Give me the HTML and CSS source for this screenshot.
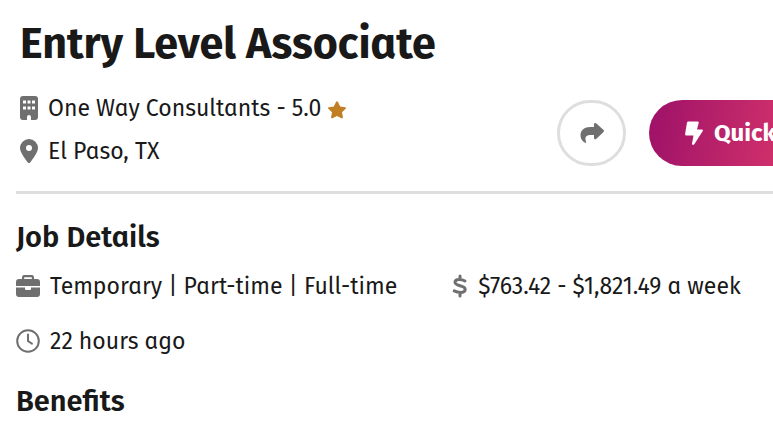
FILE: index.html
```html
<!DOCTYPE html>
<html lang="en">
<head>
<meta charset="utf-8">
<meta name="viewport" content="width=device-width, initial-scale=1">
<title>Entry Level Associate</title>
<link rel="stylesheet" href="styles.css">
</head>
<body>
<main class="page">
  <header class="job-header">
    <h1>Entry Level Associate</h1>
    <div class="header-row">
      <div class="company">
        <p class="meta">
          <svg class="icon-slim" viewBox="0 0 18 24" aria-hidden="true"><path fill-rule="evenodd" d="M3 0h12a3 3 0 0 1 3 3v18a3 3 0 0 1-3 3h-4v-3a2 2 0 0 0-4 0v3H3a3 3 0 0 1-3-3V3a3 3 0 0 1 3-3zM3 4.500v3h3v-3zm4.500 0v3h3v-3zm4.500 0v3h3v-3zM3 10.500v3h3v-3zm4.500 0v3h3v-3zm4.500 0v3h3v-3z"/></svg>
          <span>One Way Consultants - 5.0</span>
          <svg class="star" viewBox="0 0 18 18" aria-hidden="true"><path d="M8 1q1-1.500 2 0l2.200 4.500 4.900.7q1.500.4.500 1.600L14 11.300l.9 5q0 1.600-1.400 1L9 15l-4.500 2.300q-1.400.6-1.400-1l.9-5L.4 7.800q-1-1.200.5-1.600l4.900-.7z"/></svg>
        </p>
        <p class="meta">
          <svg class="icon-slim" viewBox="0 0 18 24" aria-hidden="true"><path fill-rule="evenodd" d="M9 0a9 9 0 0 1 9 9c0 4-5.200 11-7.800 14.400q-1.200 1.200-2.400 0C5.200 20 0 13 0 9a9 9 0 0 1 9-9zm0 6a3 3 0 1 0 0 6 3 3 0 0 0 0-6z"/></svg>
          <span>El Paso, TX</span>
        </p>
      </div>
      <div class="actions">
        <button class="share" type="button" aria-label="Share">
          <svg viewBox="0 0 24 24" aria-hidden="true"><path d="M14 3.400c0-1.500 1.300-2 2.400-1l6.900 6.400q1.400 1.200 0 2.400l-6.900 6.500c-1.100 1-2.400.5-2.400-1V14h-4c-3.500 0-5.500 2-4.200 5.900.3 1 .5 1.700-.2 2.100C2.500 20.500.5 18 .5 14.500.5 9 4.500 6 10 6h4z"/></svg>
        </button>
        <button class="apply" type="button">
          <svg viewBox="0 0 18 24" aria-hidden="true"><path d="M3.300.5h9.200q1.500 0 1.200 1.400L12 8.500h4.800q1.700.2.800 1.800l-8.300 13q-1.800 1.500-2.300-.6l1.500-8.200H1.200Q0 14.300.1 13L2 1.600Q2.200.5 3.300.5z"/></svg>
          <span>Quick Apply</span>
        </button>
      </div>
    </div>
  </header>
  <section>
    <h2>Job Details</h2>
    <ul class="details">
      <li>
        <svg class="icon" viewBox="0 0 24 24" aria-hidden="true"><path fill-rule="evenodd" d="M6 5V3.200A2.200 2.200 0 0 1 8.200 1h7.600A2.200 2.200 0 0 1 18 3.200V5h3a3 3 0 0 1 3 3v4H0V8a3 3 0 0 1 3-3zm2.200 0h7.600V3.200H8.200zM0 13.500h9V15a1 1 0 0 0 1 1h4a1 1 0 0 0 1-1v-1.500h9V20a3 3 0 0 1-3 3H3a3 3 0 0 1-3-3z"/></svg>
        <span>Temporary | Part-time | Full-time</span>
      </li>
      <li>
        <svg class="icon-dollar" viewBox="0 0 16 24" aria-hidden="true"><path d="M8 2v3M8 19v3M13 7C9.500 5 3 4.500 3 8.300c0 4.200 10.200 2.600 10.200 7 0 4.300-7 3.700-11 1.600"/></svg>
        <span>$763.42 - $1,821.49 a week</span>
      </li>
      <li>
        <svg class="icon clock" viewBox="0 0 24 24" aria-hidden="true"><circle cx="12" cy="12" r="10.800"/><path d="M12 5.500V12l4 2.800"/></svg>
        <span>22 hours ago</span>
      </li>
    </ul>
  </section>
  <section>
    <h2>Benefits</h2>
  </section>
</main>
</body>
</html>
```
FILE: styles.css
```css
* {
  box-sizing: border-box;
}

body {
  margin: 0;
  overflow-x: hidden;
  background: #fff;
  color: #191919;
  font-family: "Fira Sans", "Noto Sans", sans-serif;
  font-size: 23px;
  font-feature-settings: "ss04";
  line-height: 32px;
}

h1, h2, p, ul {
  margin: 0;
  padding: 0;
}

.page {
  min-width: 928px;
  padding: 16px;
}

.job-header {
  padding-bottom: 24px;
  border-bottom: 3px solid #dedede;
}

h1 {
  padding-left: 4px;
  font-size: 43px;
  font-weight: 700;
  line-height: 56px;
}

.header-row {
  display: flex;
  justify-content: space-between;
  align-items: flex-end;
  padding-top: 20px;
}

.company {
  display: grid;
  gap: 11px;
  padding-left: 4px;
}

.meta {
  display: flex;
  align-items: center;
  gap: 10px;
}

svg {
  flex: none;
  fill: #6f6f6f;
}

.icon-slim {
  width: 18px;
  height: 24px;
}

.meta .star {
  width: 18px;
  height: 18px;
  margin: 4px 0 0 -3px;
  fill: #c17f24;
}

.actions {
  display: flex;
  gap: 23px;
  padding-bottom: 1px;
}

button {
  display: flex;
  align-items: center;
  justify-content: center;
  height: 66px;
  padding: 0;
  border-radius: 34px;
  font: inherit;
  font-feature-settings: inherit;
}

.share {
  width: 69px;
  border: 3px solid #dedede;
  background: #fff;
}

.share svg {
  width: 24px;
  height: 24px;
}

.apply {
  gap: 11px;
  width: 263px;
  justify-content: flex-start;
  padding-left: 36px;
  border: 0;
  background: linear-gradient(100deg, #9d1168, #cf306b 50%, #f0506a);
  color: #fff;
  font-size: 24px;
  font-weight: 700;
  white-space: nowrap;
}

.apply svg {
  width: 18px;
  height: 24px;
  fill: #fff;
}

h2 {
  padding-top: 24px;
  font-size: 29px;
  font-weight: 600;
  line-height: 40px;
}

.details {
  display: grid;
  grid-template-columns: auto auto;
  justify-content: start;
  gap: 23px 55px;
  padding: 12px 0 1px;
  list-style: none;
}

.details li {
  display: flex;
  align-items: center;
  gap: 10px;
}

.icon {
  width: 24px;
  height: 24px;
}

.icon-dollar {
  width: 16px;
  height: 24px;
  fill: none;
  stroke: #6f6f6f;
  stroke-width: 3;
  stroke-linecap: round;
}

.clock {
  fill: none;
  stroke: #6f6f6f;
  stroke-width: 2;
  stroke-linecap: round;
}
```
